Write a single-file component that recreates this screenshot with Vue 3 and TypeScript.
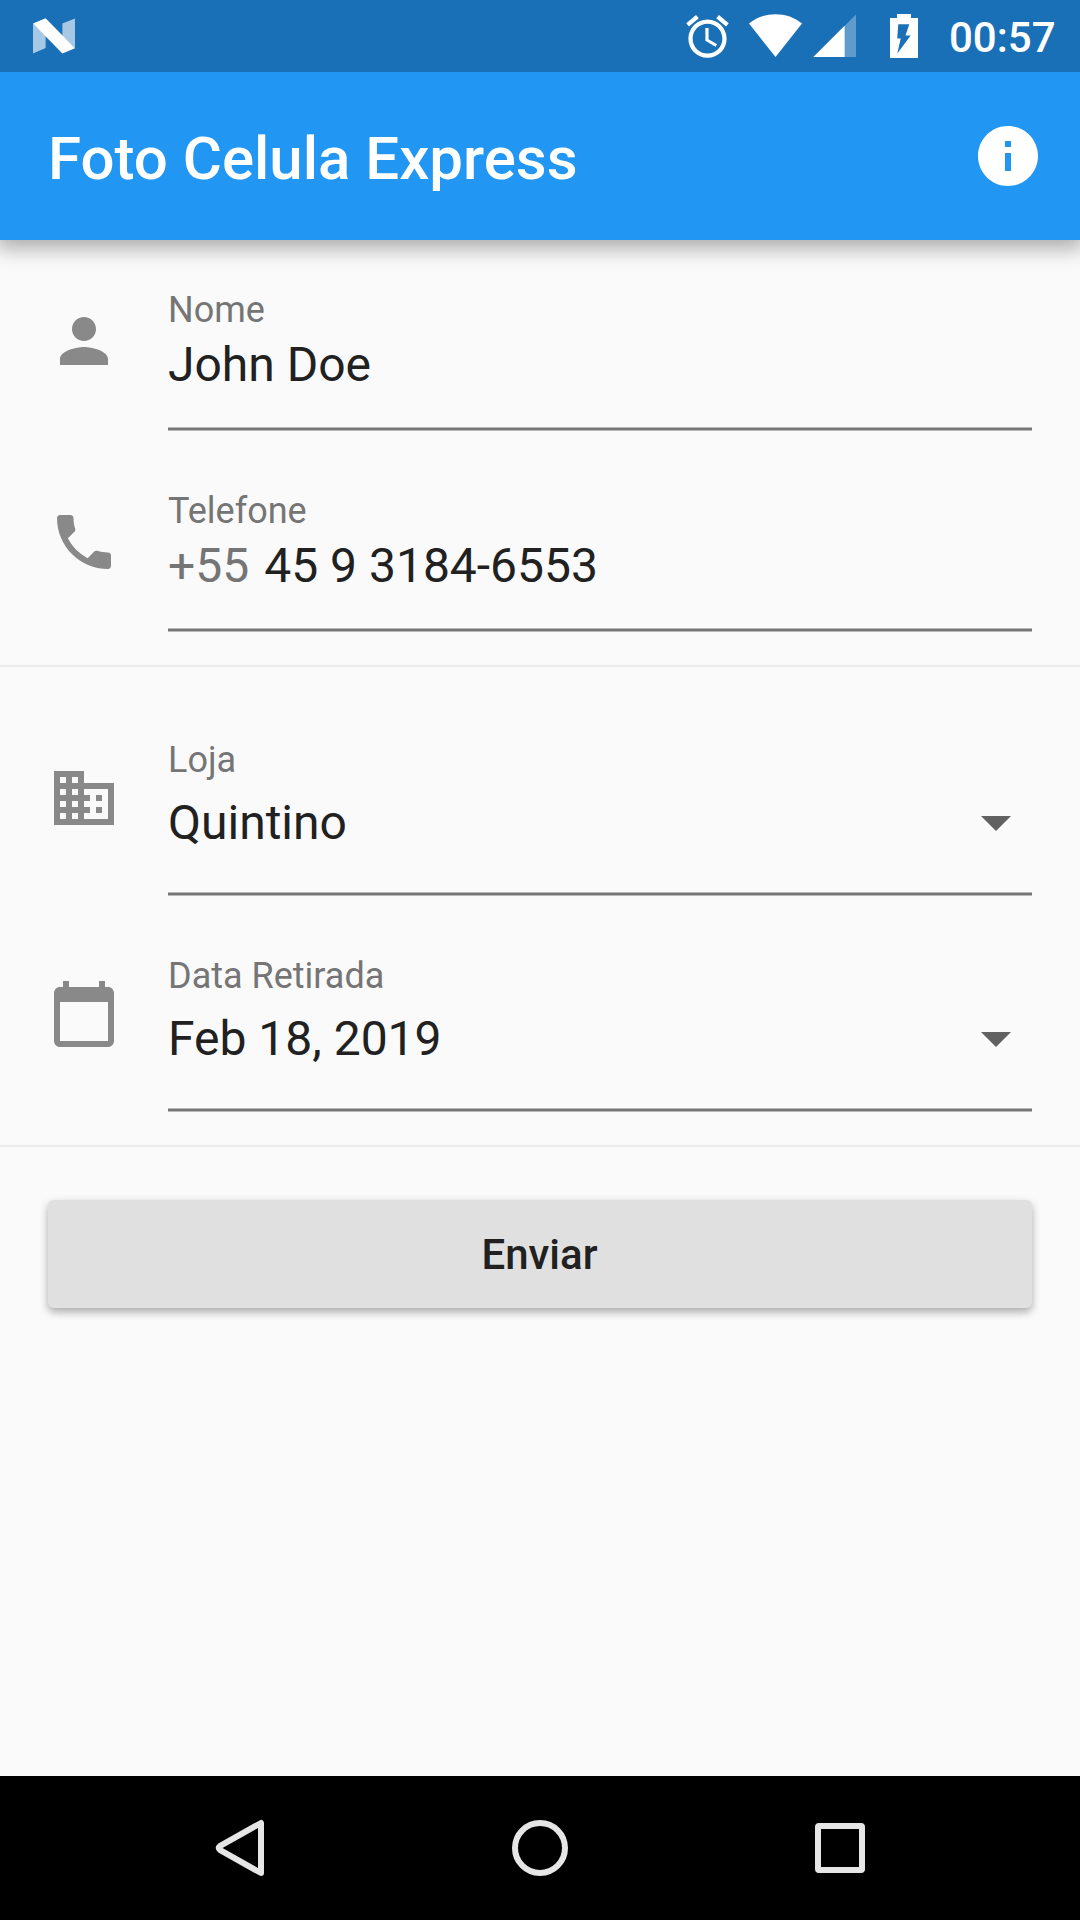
<script setup lang="ts">
interface Field {
  id: string
  label: string
  value: string
  icon: string
  prefix?: string
  dropdown?: boolean
}

const contact: Field[] = [
  {
    id: 'name',
    label: 'Nome',
    value: 'John Doe',
    icon: 'M12 12c2.21 0 4-1.79 4-4s-1.79-4-4-4-4 1.79-4 4 1.79 4 4 4zm0 2c-2.67 0-8 1.34-8 4v2h16v-2c0-2.66-5.33-4-8-4z',
  },
  {
    id: 'phone',
    label: 'Telefone',
    value: '45 9 3184-6553',
    prefix: '+55',
    icon: 'M6.62 10.79c1.44 2.83 3.76 5.14 6.59 6.59l2.2-2.2c.27-.27.67-.36 1.02-.24 1.12.37 2.33.57 3.57.57.55 0 1 .45 1 1V20c0 .55-.45 1-1 1-9.39 0-17-7.61-17-17 0-.55.45-1 1-1h3.5c.55 0 1 .45 1 1 0 1.25.2 2.45.57 3.57.11.35.03.74-.25 1.02l-2.2 2.2z',
  },
]

const pickup: Field[] = [
  {
    id: 'store',
    label: 'Loja',
    value: 'Quintino',
    dropdown: true,
    icon: 'M12 7V3H2v18h20V7H12zM6 19H4v-2h2v2zm0-4H4v-2h2v2zm0-4H4V9h2v2zm0-4H4V5h2v2zm4 12H8v-2h2v2zm0-4H8v-2h2v2zm0-4H8V9h2v2zm0-4H8V5h2v2zm10 12h-8v-2h2v-2h-2v-2h2v-2h-2V9h8v10zm-2-8h-2v2h2v-2zm0 4h-2v2h2v-2z',
  },
  {
    id: 'date',
    label: 'Data Retirada',
    value: 'Feb 18, 2019',
    dropdown: true,
    icon: 'M20 3h-1V1h-2v2H7V1H5v2H4c-1.1 0-2 .9-2 2v16c0 1.1.9 2 2 2h16c1.1 0 2-.9 2-2V5c0-1.1-.9-2-2-2zm0 18H4V8h16v13z',
  },
]
</script>

<template>
  <div class="screen">
    <div class="status">
      <svg class="logo" width="44" height="36" viewBox="32 18 44 36">
        <path d="M33 23.5V53.4l12.6-5.3V35.5zM62.4 23.4l12.6-5V48.2L62.4 36z" fill="#fff" fill-opacity=".62" />
        <path d="M33 23.5 45.6 18.2 75 48.2 62.4 53.4z" fill="#fff" />
      </svg>
      <svg class="alarm" width="51" height="51" viewBox="0 0 24 24" fill="#fff">
        <path d="M22 5.72l-4.6-3.86-1.29 1.53 4.6 3.86L22 5.72zM7.88 3.39L6.6 1.86 2 5.71l1.29 1.53 4.59-3.85zM12.5 8H11v6l4.75 2.85.75-1.23-4-2.37V8zM12 4c-4.97 0-9 4.03-9 9s4.02 9 9 9c4.97 0 9-4.03 9-9s-4.03-9-9-9zm0 16c-3.87 0-7-3.13-7-7s3.13-7 7-7 7 3.13 7 7-3.13 7-7 7z" />
      </svg>
      <svg class="wifi" width="54" height="44" viewBox="749 14 54 44">
        <path d="M749 23.6C756.5 17.3 765.7 14.2 775.5 14.2S794.5 17.3 802 23.6L775.5 57z" fill="#fff" />
      </svg>
      <svg class="signal" width="44" height="44" viewBox="813 14 44 44">
        <path d="M813.4 57 856 14.4V57z" fill="#fff" fill-opacity=".3" />
        <path d="M813.4 57 844.6 25.8V57z" fill="#fff" />
      </svg>
      <svg class="battery" width="28" height="44" viewBox="890 14 28 44">
        <path fill-rule="evenodd" fill="#fff" d="M897 14h14v4h7v40h-28V18h7zM898.3 24.3 897.2 38.6H900.7L897.3 53.5 910.7 35.6H905.5L909.3 24.3z" />
      </svg>
      <span class="clock">00:57</span>
    </div>

    <header class="appbar">
      <h1>Foto Celula Express</h1>
      <svg width="72" height="72" viewBox="0 0 24 24" fill="#fff">
        <path d="M12 2C6.48 2 2 6.48 2 12s4.48 10 10 10 10-4.48 10-10S17.52 2 12 2zm1 15h-2v-6h2v6zm0-8h-2V7h2v2z" />
      </svg>
    </header>

    <main>
      <section v-for="(group, i) in [contact, pickup]" :key="i" class="group">
        <div v-for="f in group" :key="f.id" class="row" :class="{ select: f.dropdown }">
          <svg class="icon" width="72" height="72" viewBox="0 0 24 24"><path :d="f.icon" /></svg>
          <div class="field">
            <div class="label">{{ f.label }}</div>
            <div class="value">
              <span v-if="f.prefix" class="prefix">{{ f.prefix }}</span>
              <span class="text">{{ f.value }}</span>
              <svg v-if="f.dropdown" class="arrow" width="30" height="15" viewBox="0 0 30 15">
                <path d="M0 0h30L15 15z" />
              </svg>
            </div>
            <div class="line"></div>
          </div>
        </div>
      </section>
      <button type="button" class="send">Enviar</button>
    </main>

    <nav class="navbar">
      <svg width="56" height="60" viewBox="212 1818 56 60">
        <path d="M261 1823V1873L220.2 1850.2Q217.2 1848 220.2 1845.8Z" />
      </svg>
      <svg width="60" height="60" viewBox="0 0 60 60"><circle cx="30" cy="30" r="25" /></svg>
      <svg width="56" height="60" viewBox="0 0 56 60"><rect x="6" y="8" width="44" height="44" rx="1" /></svg>
    </nav>
  </div>
</template>

<style>
body {
  margin: 0;
}
</style>

<style scoped>
.screen {
  width: 1080px;
  height: 1920px;
  display: flex;
  flex-direction: column;
  overflow: hidden;
  background: #fafafa;
  color: #212121;
  font-family: Roboto, "Liberation Sans", sans-serif;
}
svg {
  display: block;
  flex: none;
}
.status {
  flex: none;
  height: 72px;
  display: flex;
  align-items: flex-start;
  background: #1a70b7;
}
.logo {
  margin: 18px auto 0 32px;
}
.alarm {
  margin: 11px 16px 0 0;
}
.wifi {
  margin: 14px 10px 0 0;
}
.signal {
  margin: 14px 33px 0 0;
}
.battery {
  margin-top: 14px;
}
.clock {
  width: 131px;
  margin-left: 31px;
  padding-top: 13px;
  font-size: 42px;
  font-weight: 500;
  line-height: 50px;
  color: #fff;
}
.appbar {
  flex: none;
  box-sizing: border-box;
  height: 168px;
  padding: 0 36px 0 48px;
  display: flex;
  align-items: center;
  justify-content: space-between;
  background: #2196f3;
  box-shadow: 0 4px 20px 4px rgba(0, 0, 0, 0.33);
  clip-path: inset(0 0 -60px 0);
}
h1 {
  margin: 0;
  padding-top: 6px;
  font-size: 60px;
  font-weight: 500;
  line-height: 70px;
  color: #fff;
}
main {
  flex: 1;
  display: flex;
  flex-direction: column;
}
.group {
  display: flex;
  flex-direction: column;
  gap: 59px;
  padding: 49px 48px 33px;
  border-bottom: 2px solid #ebebeb;
}
.group + .group {
  padding-top: 72px;
}
.row {
  display: flex;
  gap: 48px;
}
.icon {
  margin-top: 16px;
  fill: #898989;
}
.field {
  flex: 1;
}
.label {
  font-size: 36px;
  line-height: 42px;
  color: #757575;
}
.value {
  display: flex;
  align-items: center;
  height: 56px;
  margin: 6px 0 34px;
  font-size: 48px;
  line-height: 56px;
}
.prefix {
  margin-right: 15px;
  color: #757575;
}
.arrow {
  margin: 0 21px 0 auto;
  fill: #616161;
}
.line {
  box-sizing: border-box;
  height: 4px;
  border: solid #b8b8b8;
  border-width: 1px 0;
  background: #757575;
}
.select .icon {
  margin-top: 23px;
}
.select .value {
  margin: 14px 0 41px;
}
.send {
  height: 108px;
  margin: 53px 48px 0;
  padding: 2px 1px 0 0;
  border: 0;
  border-radius: 6px;
  background: #e0e0e0;
  box-shadow: 0 4px 8px rgba(0, 0, 0, 0.32);
  font: 500 42px/50px Roboto, "Liberation Sans", sans-serif;
  color: #212121;
}
.navbar {
  flex: none;
  box-sizing: border-box;
  height: 144px;
  padding: 0 212px;
  display: flex;
  align-items: center;
  justify-content: space-between;
  background: #000;
}
.navbar svg {
  fill: none;
  stroke: #e6e6e6;
  stroke-width: 6;
  stroke-linejoin: round;
}
</style>
